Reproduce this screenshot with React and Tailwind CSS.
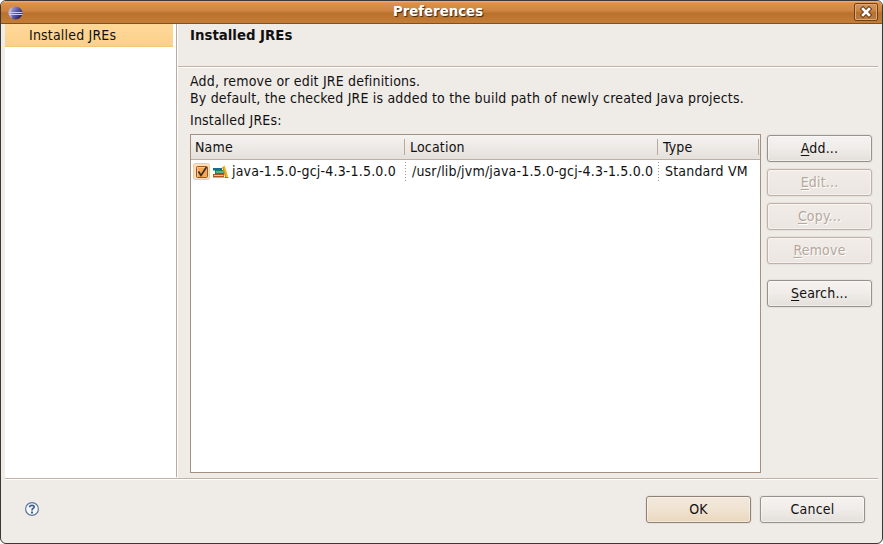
import React from "react";

function Button({ label, mnemonic, disabled, primary, className = "" }) {
  const tone = disabled
    ? "border-[#bfb1a8] from-[#f1ece8] to-[#ebe6e1] text-[#b5a89d] [text-shadow:1px_1px_0_#fff]"
    : primary
      ? "border-[#8f8272] from-[#f3e8dc] via-[#f0e3d2] to-[#ead7bc] text-[#111]"
      : "border-[#97928a] from-[#f5f3f1] via-[#efece9] to-[#e4dfd9] text-[#111]";
  return (
    <button
      className={`flex h-[27px] w-[105px] shrink-0 items-center justify-center rounded-[3px] border bg-linear-to-b pb-px shadow-[inset_0_0_0_1px_rgba(255,255,255,0.45),0_0_0_1px_rgba(200,190,180,0.22)] ${tone} ${className}`}
    >
      <span className="whitespace-pre">
        {mnemonic ? <span className="underline underline-offset-2">{label[0]}</span> : label[0]}
        {label.slice(1)}
      </span>
    </button>
  );
}

function EclipseIcon() {
  return (
    <svg width="15" height="14" viewBox="0 0 15 14" className="mt-px block">
      <defs>
        <linearGradient id="orb" x1="0" y1="0.2" x2="1" y2="0.8">
          <stop offset="0" stopColor="#b4b6e2" />
          <stop offset="0.45" stopColor="#6563ae" />
          <stop offset="1" stopColor="#181350" />
        </linearGradient>
      </defs>
      <ellipse cx="7.5" cy="7" rx="7" ry="6.5" fill="url(#orb)" />
      <path d="M4.5 1.200A7 6.2 0 0 0 4.5 12.500Q1.8 7 4.5 1.200Z" fill="#c3bbd6" opacity=".7" />
      <path d="M1 6.500h13.5M1 8.500h13.5" stroke="#c8d0f0" strokeWidth="1" />
    </svg>
  );
}

function CloseIcon() {
  return (
    <svg width="12" height="12" viewBox="0 0 12 12" className="block">
      <path d="M3 3l6 6M9 3l-6 6" stroke="#6f3d17" strokeWidth="4.6" strokeLinecap="square" />
      <path d="M3 3l6 6M9 3l-6 6" stroke="#fff" strokeWidth="2.6" strokeLinecap="square" />
    </svg>
  );
}

function CheckBox() {
  return (
    <svg width="17" height="17" viewBox="0 0 17 17" className="block">
      <rect x=".5" y=".5" width="16" height="16" rx="2" fill="#fbdfc2" stroke="#f8c79a" />
      <rect x="3.5" y="3.5" width="11" height="11" rx="1" fill="#f6a655" stroke="#96572a" />
      <path d="M4.5 13.500V4.500H13.500" fill="none" stroke="#fbc48a" />
      <path d="M5.500 8.500l2.500 4L13.500 4" fill="none" stroke="#3a2d24" strokeWidth="1.7" />
    </svg>
  );
}

function BooksIcon() {
  return (
    <svg width="16" height="13" viewBox="0 0 16 13" className="block">
      <rect x="0" y="3" width="9" height="2.500" fill="#17689b" />
      <rect x="2" y="5" width="9" height="4" fill="#12875a" />
      <path d="M3 7h7.500" stroke="#a5dcc0" />
      <rect x="0" y="9" width="11" height="3.500" fill="#b1541b" />
      <path d="M1 10.500h9.500" stroke="#f2c196" />
      <path d="M9.300 2L11.800 .5L15 11.500L12.300 12.500Z" fill="#f0b428" />
      <path d="M9.800 2L12.700 12" stroke="#c8890f" />
      <path d="M11.500 12.500h4" stroke="#b27009" />
    </svg>
  );
}

function HelpIcon() {
  return (
    <svg width="14" height="14" viewBox="0 0 14 14" className="block">
      <circle cx="7" cy="7" r="6.400" fill="#f5f8fc" stroke="#60779f" strokeWidth="1.200" />
      <path d="M4.700 5.300V4.500Q5 3.300 7 3.300Q9.200 3.300 9.200 5Q9.200 6 8 6.600Q7 7.100 7 8.500" fill="none" stroke="#455d8b" strokeWidth="1.700" />
      <rect x="6" y="9.500" width="2" height="2" fill="#455d8b" />
    </svg>
  );
}

export default function App() {
  return (
    <div className="h-[544px] w-[883px] overflow-hidden bg-white font-['DejaVu_Sans_Condensed','DejaVu_Sans',sans-serif] text-[14px] leading-[17px] tracking-[0.185px] text-[#111]">
      <div className="flex h-full flex-col overflow-hidden rounded-[6px] border border-[#3b3735] bg-[#efebe7]">
        <header className="flex h-[23px] shrink-0 items-center border-b border-[#80501f] bg-[linear-gradient(#f0b27a_0px,#dd9149_2px,#ce8441_10px,#b9722d_12px,#c47d36_22px)] pr-1 pl-[7px]">
          <EclipseIcon />
          <h1 className="flex-1 pr-[5px] pb-px pl-[4px] text-center font-['DejaVu_Sans',sans-serif] text-[13.33px] font-bold tracking-normal text-white [text-shadow:1px_1px_1px_#3c240e]">
            Preferences
          </h1>
          <button className="flex h-[18px] w-6 items-center justify-center rounded-[2px] border border-[#714116] bg-[linear-gradient(#d59455,#ca8442_45%,#b57130_50%,#bd7b3c)] shadow-[inset_0_0_0_1px_#dca878]">
            <CloseIcon />
          </button>
        </header>

        <main className="mr-1 ml-1 flex h-[454px] shrink-0">
          <aside className="w-[171px] shrink-0 bg-white pr-[3px]">
            <div className="h-[23px] border-b border-[#f5c778] bg-linear-to-b from-[#ffd89a] to-[#fbd089] pt-[3px] pl-6">
              Installed JREs
            </div>
          </aside>
          <div className="mb-px w-px bg-[#b8aaa0]" />
          <div className="w-px bg-[#fdfcfb]" />

          <section className="flex flex-1 flex-col">
            <div className="h-[42px] shrink-0 pt-[3px] pl-3 font-['DejaVu_Sans',sans-serif] text-[13.33px] font-bold tracking-normal">
              Installed JREs
            </div>
            <div className="h-[2px] shrink-0 border-t border-b border-t-[#c1b2a5] border-b-white" />
            <div className="pt-[5px] pl-3">
              <p>Add, remove or edit JRE definitions.</p>
              <p className="whitespace-nowrap">By default, the checked JRE is added to the build path of newly created Java projects.</p>
              <p className="mt-[5px]">Installed JREs:</p>
            </div>
            <div className="mt-[5px] flex pl-3">
              <div className="h-[339px] w-[571px] border border-[#a39081] bg-white">
                <div className="flex h-[25px] border-b border-[#bbaea3] bg-linear-to-b from-[#f5f3f1] to-[#e5e0db] py-1">
                  <div className="w-[214px] border-r border-[#b8aaa0] pl-1">Name</div>
                  <div className="w-[253px] border-r border-[#b8aaa0] pl-[5px]">Location</div>
                  <div className="w-[101px] border-r border-[#b8aaa0] pl-[5px]">Type</div>
                </div>
                <div className="flex h-[23px] items-center">
                  <div className="flex w-[214px] items-center pl-[2px]">
                    <CheckBox />
                    <div className="ml-[3px]"><BooksIcon /></div>
                    <span className="ml-[3px] whitespace-nowrap">java-1.5.0-gcj-4.3-1.5.0.0</span>
                  </div>
                  <div className="mt-px h-[21px] w-px bg-[repeating-linear-gradient(#9d9790_0px_1px,transparent_1px_3px)]" />
                  <div className="w-[252px] pl-[6px] whitespace-nowrap">/usr/lib/jvm/java-1.5.0-gcj-4.3-1.5.0.0</div>
                  <div className="mt-px h-[21px] w-px bg-[repeating-linear-gradient(#9d9790_0px_1px,transparent_1px_3px)]" />
                  <div className="pl-[6px] whitespace-nowrap">Standard VM</div>
                </div>
              </div>
              <div className="ml-[6px] flex flex-col gap-[7px] pt-px">
                <Button label="Add..." mnemonic />
                <Button label="Edit..." mnemonic disabled />
                <Button label="Copy..." mnemonic disabled />
                <Button label="Remove" mnemonic disabled />
                <Button label="Search..." mnemonic className="mt-[9px]" />
              </div>
            </div>
          </section>
        </main>

        <footer className="mx-1 flex flex-1 items-start border-t border-[#c1b2a5] pt-[17px] pr-[13px] pl-[20px] shadow-[inset_0_1px_0_#fff]">
          <div className="mt-[6px] flex-1"><HelpIcon /></div>
          <Button label="OK" primary />
          <Button label="Cancel" className="ml-[9px]" />
        </footer>
      </div>
    </div>
  );
}
